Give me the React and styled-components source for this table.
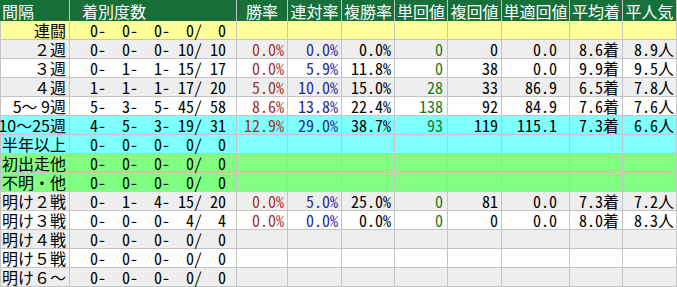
import styled, { createGlobalStyle } from "styled-components";

const GlobalStyle = createGlobalStyle`
  body {
    margin: 0;
    background: #ffffff;
  }
`;

const COLS = "70px 167px 51px 54px 53px 53px 54px 68px 53px 54px";

const ROW_BG = {
  yellow: "#ffff99",
  gray: "#eeeeee",
  white: "#ffffff",
  cyan: "#80ffff",
  green: "#80ff80",
};

const TEXT = {
  red: "#a03030",
  blue: "#28289a",
  green: "#1d7a1d",
  black: "#000000",
};

const Table = styled.div`
  width: 677px;
  font-family: "Noto Sans CJK JP", "Noto Sans", sans-serif;
  font-size: 16px;
  color: #000;
`;

const Row = styled.div`
  display: grid;
  grid-template-columns: ${COLS};
  height: ${({ $head }) => ($head ? "21px" : "19px")};
  background: ${({ $head, $bg }) => ($head ? "#17703a" : ROW_BG[$bg] || "#fff")};
  color: ${({ $head }) => ($head ? "#ffffff" : "#000")};
`;

const Cell = styled.div`
  box-sizing: border-box;
  border-right: 1px solid #c4c4c4;
  border-bottom: 1px solid ${({ $line }) => $line || "#c4c4c4"};
  padding-right: ${({ $pr }) => $pr ?? 3}px;
  padding-left: ${({ $pl }) => $pl ?? 0}px;
  display: flex;
  align-items: center;
  justify-content: ${({ $align }) =>
    $align === "left" ? "flex-start" : $align === "center" ? "center" : "flex-end"};
  white-space: pre;
  line-height: 18px;
  font-feature-settings: ${({ $half }) => ($half ? '"hwid"' : "normal")};
  color: ${({ $tone }) => TEXT[$tone] || "inherit"};
  &:first-child {
    border-left: 1px solid #c4c4c4;
  }
`;

const HeadCell = styled(Cell)`
  border-bottom: none;
  padding-right: 0;
  line-height: 20px;
  &:first-child {
    border-left: none;
  }
`;

const headers = ["間隔", "着別度数", "勝率", "連対率", "複勝率", "単回値", "複回値", "単適回値", "平均着", "平人気"];

const rows = [
  { label: "連闘", bg: "yellow", c: [0, 0, 0, 0, 0] },
  { label: "２週", bg: "gray", c: [0, 0, 0, 10, 10], v: ["0.0%", "0.0%", "0.0%", "0", "0", "0.0", "8.6着", "8.9人"] },
  { label: "３週", bg: "white", c: [0, 1, 1, 15, 17], v: ["0.0%", "5.9%", "11.8%", "0", "38", "0.0", "9.9着", "9.5人"] },
  { label: "４週", bg: "gray", c: [1, 1, 1, 17, 20], v: ["5.0%", "10.0%", "15.0%", "28", "33", "86.9", "6.5着", "7.8人"] },
  { label: "5～ 9週", bg: "white", c: [5, 3, 5, 45, 58], v: ["8.6%", "13.8%", "22.4%", "138", "92", "84.9", "7.6着", "7.6人"] },
  { label: "10～25週", bg: "cyan", c: [4, 5, 3, 19, 31], v: ["12.9%", "29.0%", "38.7%", "93", "119", "115.1", "7.3着", "6.6人"] },
  { label: "半年以上", bg: "cyan", c: [0, 0, 0, 0, 0] },
  { label: "初出走他", bg: "green", c: [0, 0, 0, 0, 0] },
  { label: "不明・他", bg: "green", c: [0, 0, 0, 0, 0], line: "#9be89b" },
  { label: "明け２戦", bg: "gray", c: [0, 1, 4, 15, 20], v: ["0.0%", "5.0%", "25.0%", "0", "81", "0.0", "7.3着", "7.2人"] },
  { label: "明け３戦", bg: "white", c: [0, 0, 0, 4, 4], v: ["0.0%", "0.0%", "0.0%", "0", "0", "0.0", "8.0着", "8.3人"] },
  { label: "明け４戦", bg: "gray", c: [0, 0, 0, 0, 0] },
  { label: "明け５戦", bg: "white", c: [0, 0, 0, 0, 0] },
  { label: "明け６～", bg: "gray", c: [0, 0, 0, 0, 0] },
];

// 着別度数 "1- 2- 3- 着外/ 計" の固定幅書式
const counts = ([a, b, c, d, e]) =>
  `${a}-` +
  `${String(b).padStart(3)}-` +
  `${String(c).padStart(3)}-` +
  `${String(d).padStart(3)}/` +
  `${String(e).padStart(3)}`;

const valueCols = [
  { tone: "red", pr: 3 },
  { tone: "blue", pr: 3 },
  { tone: "black", pr: 3 },
  { tone: "green", pr: 4 },
  { tone: "black", pr: 3 },
  { tone: "black", pr: 12 },
  { tone: "black", pr: 3 },
  { tone: "black", pr: 2 },
];

const App = () => {
  return (
    <>
      <GlobalStyle />
      <Table>
        <Row $head>
          {headers.map((h, i) => (
            <HeadCell
              key={h}
              $align={i < 2 ? "left" : "center"}
              $pl={i === 0 ? 2 : i === 1 ? 12 : 0}
            >
              {h}
            </HeadCell>
          ))}
        </Row>
        {rows.map((r) => (
          <Row key={r.label} $bg={r.bg}>
            <Cell $pr={3} $line={r.line}>{r.label}</Cell>
            <Cell $align="left" $pl={20} $line={r.line} $half>{counts(r.c)}</Cell>
            {valueCols.map((col, i) => (
              <Cell key={i} $tone={col.tone} $pr={col.pr} $line={r.line} $half>
                {r.v ? r.v[i] : ""}
              </Cell>
            ))}
          </Row>
        ))}
      </Table>
    </>
  );
};

export default App;
